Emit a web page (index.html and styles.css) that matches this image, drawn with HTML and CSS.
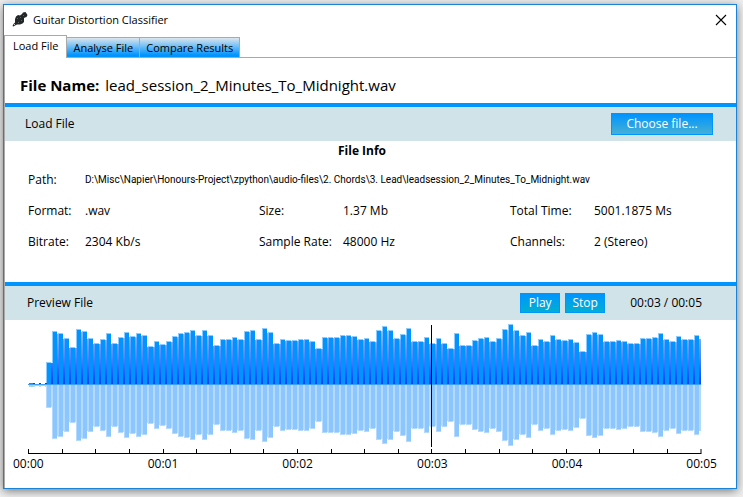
FILE: index.html
```html
<!DOCTYPE html>
<html lang="en">
<head>
<meta charset="utf-8">
<title>Guitar Distortion Classifier</title>
<link rel="stylesheet" href="styles.css">
</head>
<body>
<div class="window">
  <header class="titlebar">
    <svg class="app-icon" viewBox="0 0 16 16" aria-hidden="true">
      <path fill="#242727" d="M10 2 11 .500 13.500 0 14.500 1.500 15.500 3 14.500 5 13 5.500 12 6 12 10 10.500 11.500 8 12.500 5 12.500 3 13.500 1.500 14.500 .500 14 1.500 12 3 10.500 3 7 4 4.500 6 3 8 3.500Z"/>
      <path fill="#5d6262" d="M5 6h1v1H5zM8 5h1v1H8zM6 10h1v1H6zM11 3h1v1h-1zM9 8h1v1H9z"/>
      <path fill="#c8caca" d="M2 12h1v1H2z"/>
    </svg>
    <h1 class="title">Guitar Distortion Classifier</h1>
    <button class="close" type="button" aria-label="Close">
      <svg viewBox="0 0 10 10" aria-hidden="true"><path d="M0 0 10 10M10 0 0 10" fill="none" stroke="#000" stroke-width="1.100"/></svg>
    </button>
  </header>
  <div class="tabs" role="tablist">
    <button class="tab tab-active" type="button" role="tab" aria-selected="true">Load File</button>
    <button class="tab" type="button" role="tab" aria-selected="false">Analyse File</button>
    <button class="tab" type="button" role="tab" aria-selected="false">Compare Results</button>
  </div>
  <main class="panel">
    <p class="file-name"><strong>File Name:</strong> <span>lead_session_2_Minutes_To_Midnight.wav</span></p>
    <section>
      <div class="bar">
        <h2 class="bar-title">Load File</h2>
        <button class="btn btn-choose" type="button">Choose file...</button>
      </div>
      <div class="info">
        <h3 class="info-title">File Info</h3>
        <dl class="info-grid">
          <dt>Path:</dt><dd class="path">D:\Misc\Napier\Honours-Project\zpython\audio-files\2. Chords\3. Lead\leadsession_2_Minutes_To_Midnight.wav</dd>
          <dt>Format:</dt><dd>.wav</dd>
          <dt>Size:</dt><dd>1.37 Mb</dd>
          <dt>Total Time:</dt><dd>5001.1875 Ms</dd>
          <dt>Bitrate:</dt><dd>2304 Kb/s</dd>
          <dt>Sample Rate:</dt><dd>48000 Hz</dd>
          <dt>Channels:</dt><dd>2 (Stereo)</dd>
        </dl>
      </div>
    </section>
    <section>
      <div class="bar bar-preview">
        <h2 class="bar-title">Preview File</h2>
        <button class="btn btn-small" type="button">Play</button>
        <button class="btn btn-small" type="button">Stop</button>
        <span class="time">00:03 / 00:05</span>
      </div>
      <div class="preview">
        <svg id="wave" class="wave" viewBox="0 0 674 134" preserveAspectRatio="none" role="img" aria-label="Waveform">
          <defs>
            <linearGradient id="seam" gradientUnits="userSpaceOnUse" x1="0" y1="10" x2="0" y2="64">
              <stop offset="0" stop-color="#8ebcff"/>
              <stop offset=".5" stop-color="#5584ff"/>
              <stop offset="1" stop-color="#0040ff"/>
            </linearGradient>
          </defs>
        </svg>
        <div class="labels">
          <span>00:00</span><span>00:01</span><span>00:02</span><span>00:03</span><span>00:04</span><span>00:05</span>
        </div>
      </div>
    </section>
  </main>
</div>
<script src="wave.js"></script>
</body>
</html>
```
FILE: styles.css
```css
* {
  box-sizing: border-box;
}

body {
  margin: 0;
  padding: 4px 6px 8px 3px;
  min-height: 100vh;
  display: flex;
  background: #efefef;
  color: #000;
  font: 12px/16px "Open Sans", "Noto Sans", sans-serif;
}

h1, h2, h3, p, dl, dd {
  margin: 0;
  font-size: 12px;
  font-weight: 400;
}

button {
  padding: 0;
  font: inherit;
}

.window {
  flex: 1;
  min-width: 0;
  display: flex;
  flex-direction: column;
  background: #fff;
  border: 1px solid #1883d7;
  box-shadow: 0 2px 9px rgba(0, 0, 0, 0.5);
}

.titlebar {
  display: flex;
  align-items: center;
  height: 30px;
  padding: 0 10px 0 8px;
}

.app-icon {
  width: 16px;
  height: 16px;
}

.title {
  flex: 1;
  margin-left: 5px;
  font-size: 11px;
}

.close {
  display: flex;
  border: 0;
  background: none;
}

.close svg {
  width: 10px;
  height: 10px;
  overflow: visible;
}

.tabs {
  display: flex;
  align-items: flex-end;
  height: 23px;
  border-bottom: 1px solid #a9a9a9;
  font-size: 11px;
}

.tab {
  height: 20px;
  padding: 0 6px;
  border: 1px solid #a9a9a9;
  border-left: 0;
  border-bottom: 0;
  background: linear-gradient(#dbe6ee, #0094ff 90%);
}

.tab-active {
  height: 23px;
  margin-bottom: -1px;
  padding: 0 8px 2px;
  border-left: 1px solid #a9a9a9;
  background: #fff;
}

.panel {
  flex: 1;
  border-left: 1px solid #a9a9a9;
}

.file-name {
  display: flex;
  align-items: center;
  gap: 6px;
  height: 45px;
  padding: 8px 15px 0;
  font-size: 15px;
}

.bar {
  display: flex;
  align-items: center;
  height: 38px;
  padding: 0 23px 0 20px;
  border-top: 4px solid #0094ff;
  background: #d0e3e9;
}

.bar-title {
  flex: 1;
}

.btn {
  border: 1px solid #0094ff;
  background: linear-gradient(#0094ff, #45b0d5);
  color: #fff;
}

.btn-choose {
  width: 102px;
  height: 22px;
}

.btn-small {
  width: 40px;
  height: 20px;
  margin-right: 5px;
  background: linear-gradient(#0094ff, #00b0d0);
}

.bar-preview {
  padding: 0 34px 0 22px;
}

.time {
  margin-left: 20px;
}

.info {
  height: 141px;
  padding-top: 2px;
}

.info-title {
  font-weight: 700;
  padding-right: 17px;
  text-align: center;
}

.info-grid {
  display: grid;
  grid-template-columns: 57px 174fr 84px 167fr 84px 142fr;
  row-gap: 15px;
  padding: 13px 0 0 23px;
}

.path {
  grid-column: 2 / -1;
  font-family: Roboto, "Open Sans", sans-serif;
  font-size: 10px;
}

.preview {
  padding: 0 34px 0 23px;
}

.wave {
  display: block;
  width: 100%;
  height: 134px;
}

.labels {
  display: flex;
  justify-content: space-between;
  margin: 2px -15px 0;
}
```
FILE: wave.js
```js
// Peak height of each sample column, in pixels above the centre line.
const peaks = [
  2, 1, 1, 21, 52, 50, 45, 36, 54, 52, 45, 40, 44, 50, 40, 46, 51, 47, 50, 48,
  37, 42, 39, 42, 47, 50, 51, 53, 48, 53, 48, 38, 44, 44, 46, 44, 52, 53, 44,
  55, 51, 40, 44, 43, 43, 44, 44, 42, 35, 46, 46, 46, 48, 48, 47, 44, 45, 42,
  53, 57, 53, 45, 49, 55, 42, 42, 46, 40, 45, 40, 35, 50, 38, 38, 43, 45, 46,
  42, 45, 54, 59, 53, 48, 51, 38, 44, 42, 48, 44, 43, 44, 41, 32, 49, 51, 49,
  42, 42, 43, 42, 40, 40, 45, 45, 46, 50, 44, 42, 47, 44, 44, 48, 45
];
const svg = document.getElementById("wave");
const centre = 64;

function rect(x, y, width, height, fill) {
  const el = document.createElementNS("http://www.w3.org/2000/svg", "rect");
  Object.entries({ x, y, width, height, fill }).forEach(([k, v]) => el.setAttribute(k, v));
  svg.append(el);
}

peaks.forEach((h, i) => {
  const x = 1 + i * 6;
  const last = i === peaks.length - 1;
  const seam = last ? h : Math.min(h, peaks[i - 1] || 0);
  if (i > 0) {
    rect(x - 2, centre - seam, 2, seam, "url(#seam)");
    rect(x - 2, centre + 1, 2, seam + 1, "#b4dbff");
  }
  if (last) return;
  if (h < 3) {
    rect(x, centre - h + 1, 4, h - 1, "#0094ff");
    rect(x, centre + 1, 4, h, "#a4d2ff");
    return;
  }
  // Soft outline one pixel round the column, then the column itself.
  rect(x - 1, centre - h - 1, 5, h - seam + 1, "#8ecbff");
  rect(x, centre - h, 4, h, "#0094ff");
  rect(x - 1, centre + 1, 5, h + 2, "#b4dbff");
  rect(x, centre + 1, 4, h + 1, "#8cc6ff");
});
rect(0, centre, 673, 1, "#3f9fff");

// Time scale: four ticks to every label, and the playhead at 00:03.
[0, 34, 67, 101, 135, 168, 202, 235, 269, 303, 336, 370, 403, 437, 471, 504, 538, 571, 605, 639]
  .forEach((x) => rect(x, 129, 1, 4, "#000"));
rect(672, 129, 2, 5, "#808080");
rect(0, 133, 673, 1, "#000");
rect(403, 5, 1, 122, "#000");
```
